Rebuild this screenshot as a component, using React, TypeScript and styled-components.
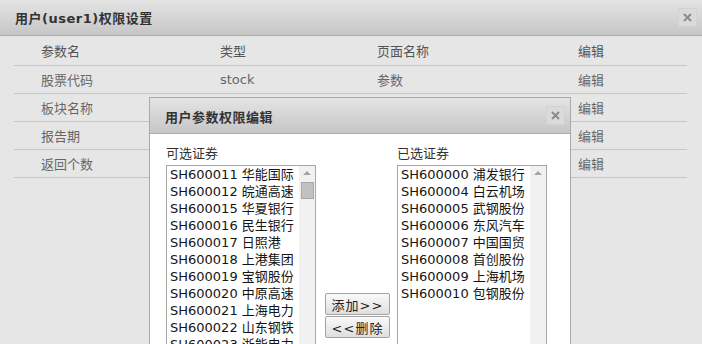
import React from "react";
import styled, { createGlobalStyle } from "styled-components";

const GlobalStyle = createGlobalStyle`
  html, body {
    margin: 0;
    padding: 0;
    background: #e6e6e6;
  }
  body {
    font-family: "DejaVu Sans", "Noto Sans CJK SC", sans-serif;
    font-size: 13px;
  }
`;

const Window = styled.div`
  position: relative;
  width: 702px;
  height: 344px;
  overflow: hidden;
  background: #e6e6e6;
`;

const Header = styled.div<{ $h: number }>`
  display: flex;
  align-items: center;
  justify-content: space-between;
  height: ${(p) => p.$h}px;
  box-sizing: border-box;
  padding: 0 5px 0 15px;
  background: linear-gradient(#e4e4e4, #c6c6c6);
  border-bottom: 1px solid #ababab;
`;

const Title = styled.div`
  font-weight: bold;
  font-size: 13px;
  letter-spacing: 0.5px;
  color: #333;
`;

const CloseBtn = styled.div`
  width: 19px;
  height: 19px;
  display: flex;
  align-items: center;
  justify-content: center;
  background: #dadada;
  border: 1px solid #d2d2d2;
  box-sizing: border-box;
  margin-top: -1px;
`;

const Table = styled.div`
  margin-left: 14px;
  width: 673px;
`;

const Row = styled.div<{ $head?: boolean }>`
  display: grid;
  grid-template-columns: 179px 157px 201px 1fr;
  align-items: center;
  height: ${(p) => (p.$head ? 30 : 28)}px;
  box-sizing: border-box;
  padding-left: 27px;
  border-bottom: 1px solid #c6c6c6;
  color: ${(p) => (p.$head ? "#555" : "#666")};
`;

// modal that sits over the settings table
const Dialog = styled.div`
  position: absolute;
  left: 149px;
  top: 97px;
  width: 422px;
  height: 320px;
  box-sizing: border-box;
  border: 1px solid #a9a9a9;
  background: #fff;
`;

const DialogTitle = styled(Title)`
  padding-top: 1px;
`;

const Body = styled.div`
  display: flex;
  align-items: flex-start;
  padding: 11px 0 0 16px;
`;

const Column = styled.div`
  display: flex;
  flex-direction: column;
`;

const Label = styled.div`
  line-height: 17px;
  color: #333;
  margin-bottom: 3px;
`;

const ListBox = styled.div`
  display: flex;
  width: 150px;
  height: 298px;
  box-sizing: border-box;
  border: 1px solid #a8a8a8;
  overflow: hidden;
`;

const Items = styled.div`
  flex: 1;
  padding-left: 3px;
`;

const Item = styled.div`
  line-height: 17px;
  height: 17px;
  white-space: nowrap;
  color: #151515;
`;

const Track = styled.div`
  width: 16px;
  background: #f1f1f1;
  display: flex;
  flex-direction: column;
  align-items: center;
`;

const Arrow = styled.div`
  width: 0;
  height: 0;
  margin-top: 5px;
  border-left: 4px solid transparent;
  border-right: 4px solid transparent;
  border-bottom: 4px solid #a3a3a3;
`;

const Thumb = styled.div`
  width: 13px;
  height: 17px;
  margin-top: 7px;
  box-sizing: border-box;
  background: #c1c1c1;
  border: 1px solid #a8a8a8;
`;

const Buttons = styled.div`
  display: flex;
  flex-direction: column;
  gap: 1px;
  margin: 148px 7px 0 9px;
`;

const Btn = styled.button`
  width: 65px;
  height: 22px;
  padding: 0;
  font-family: "DejaVu Sans", "Noto Sans CJK SC", sans-serif;
  font-size: 13px;
  letter-spacing: 1px;
  color: #222;
  border: 1px solid #a3a3a3;
  border-radius: 2px;
  background: linear-gradient(#fafafa, #dedede);
`;

function CloseIcon() {
  return (
    <svg width="9" height="9" viewBox="0 0 9 9">
      <path d="M1 1L8 8M8 1L1 8" stroke="#8c8c8c" strokeWidth="2" />
    </svg>
  );
}

const rows = [
  ["股票代码", "stock", "参数", "编辑"],
  ["板块名称", "", "", "编辑"],
  ["报告期", "", "", "编辑"],
  ["返回个数", "", "", "编辑"],
];

const available = [
  "SH600011 华能国际",
  "SH600012 皖通高速",
  "SH600015 华夏银行",
  "SH600016 民生银行",
  "SH600017 日照港",
  "SH600018 上港集团",
  "SH600019 宝钢股份",
  "SH600020 中原高速",
  "SH600021 上海电力",
  "SH600022 山东钢铁",
  "SH600023 浙能电力",
  "SH600026 中远海能",
  "SH600027 华电国际",
  "SH600028 中国石化",
  "SH600029 南方航空",
  "SH600030 中信证券",
  "SH600031 三一重工",
];

const selected = [
  "SH600000 浦发银行",
  "SH600004 白云机场",
  "SH600005 武钢股份",
  "SH600006 东风汽车",
  "SH600007 中国国贸",
  "SH600008 首创股份",
  "SH600009 上海机场",
  "SH600010 包钢股份",
];

function List({ items, thumb }: { items: string[]; thumb?: boolean }) {
  return (
    <ListBox>
      <Items>
        {items.map((s) => (
          <Item key={s}>{s}</Item>
        ))}
      </Items>
      <Track>
        <Arrow />
        {thumb && <Thumb />}
      </Track>
    </ListBox>
  );
}

export default function App() {
  return (
    <Window>
      <GlobalStyle />
      <Header $h={36}>
        <Title>用户(user1)权限设置</Title>
        <CloseBtn>
          <CloseIcon />
        </CloseBtn>
      </Header>
      <Table>
        <Row $head>
          <span>参数名</span>
          <span>类型</span>
          <span>页面名称</span>
          <span>编辑</span>
        </Row>
        {rows.map((r) => (
          <Row key={r[0]}>
            {r.map((c, i) => (
              <span key={i}>{c}</span>
            ))}
          </Row>
        ))}
      </Table>

      <Dialog>
        <Header $h={36}>
          <DialogTitle>用户参数权限编辑</DialogTitle>
          <CloseBtn>
            <CloseIcon />
          </CloseBtn>
        </Header>
        <Body>
          <Column>
            <Label>可选证券</Label>
            <List items={available} thumb />
          </Column>
          <Buttons>
            <Btn>添加&gt;&gt;</Btn>
            <Btn>&lt;&lt;删除</Btn>
          </Buttons>
          <Column>
            <Label>已选证券</Label>
            <List items={selected} />
          </Column>
        </Body>
      </Dialog>
    </Window>
  );
}
